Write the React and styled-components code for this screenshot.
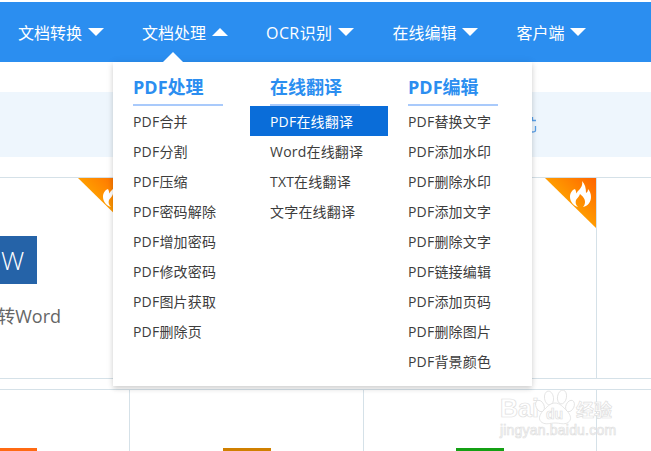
import React from "react";
import styled, { createGlobalStyle } from "styled-components";

const Global = createGlobalStyle`
  html, body { margin: 0; padding: 0; background: #fff; overflow: hidden; }
  * { box-sizing: border-box; }
  body { font-family: "Open Sans", "Noto Sans CJK SC", sans-serif; }
`;

const Page = styled.div`
  position: relative;
  width: 651px;
  height: 451px;
  padding-top: 2px;
  overflow: hidden;
  background: #fff;
`;

const Nav = styled.nav`
  display: flex;
  align-items: center;
  gap: 38px;
  height: 60px;
  padding-left: 18px;
  background: #2b8ef0;
`;

const NavItem = styled.div`
  display: flex;
  align-items: center;
  gap: 6px;
  color: #fff;
  font-size: 16px;
  letter-spacing: ${(p) => (p.$latin ? "0.4px" : "0")};
  white-space: nowrap;
`;

const Arrow = styled.span`
  width: 0;
  height: 0;
  border-left: 8px solid transparent;
  border-right: 8px solid transparent;
  border-top: ${(p) => (p.$up ? "0" : "8px solid #fff")};
  border-bottom: ${(p) => (p.$up ? "8px solid #fff" : "0")};
`;

const Band = styled.div`
  display: flex;
  align-items: center;
  height: 65px;
  margin-top: 30px;
  padding-left: 531px;
  background: #eef6fd;
`;

const Rows = styled.div`
  margin: 20px 0 0 -104px;
`;

const Row = styled.div`
  display: grid;
  grid-template-columns: 234px 234px 233px 234px;
  width: 935px;
  height: ${(p) => (p.$last ? "80px" : "202px")};
  margin-bottom: 10px;
  border-top: 1px solid #d5e1e8;
  border-bottom: ${(p) => (p.$last ? "0" : "1px solid #d5e1e8")};
`;

const Cell = styled.div`
  position: relative;
  display: flex;
  flex-direction: column;
  align-items: center;
  padding-top: 58px;
  border-right: 1px solid #d5e1e8;
`;

const Tile = styled.div`
  display: flex;
  align-items: center;
  justify-content: center;
  width: 48px;
  height: 48px;
  color: #fff;
  font-size: 26px;
  font-weight: 300;
  background: ${(p) => p.$color};
`;

const CellTitle = styled.div`
  margin-top: 20px;
  color: #666;
  font-size: 18px;
  line-height: 24px;
  white-space: nowrap;
`;

const Hot = styled.div`
  position: absolute;
  top: 0;
  right: 0;
  width: 51px;
  height: 50px;
  background: linear-gradient(225deg, #ff6400 0%, #ffa800 62%);
  clip-path: polygon(0 0, 100% 0, 100% 100%);
  svg {
    position: absolute;
    top: 3px;
    right: 3px;
  }
`;

const Menu = styled.div`
  position: absolute;
  top: 62px;
  left: 113px;
  display: grid;
  grid-template-columns: 137px 138px 1fr;
  align-items: start;
  width: 419px;
  height: 324px;
  padding-top: 12px;
  background: #fff;
  box-shadow: 0 3px 5px rgba(0, 0, 0, 0.14), 0 0 8px rgba(0, 0, 0, 0.07);
  &::before {
    content: "";
    position: absolute;
    top: -10px;
    left: 50px;
    border-left: 10px solid transparent;
    border-right: 10px solid transparent;
    border-bottom: 10px solid #fff;
  }
`;

const Heading = styled.div`
  width: 90px;
  height: 32px;
  margin-left: 20px;
  color: #2b8ef0;
  font-size: 18px;
  font-weight: 700;
  line-height: 26px;
  border-bottom: 2px solid #a9cafb;
  white-space: nowrap;
`;

const MenuLink = styled.div`
  height: 30px;
  padding-left: 20px;
  color: ${(p) => (p.$active ? "#fff" : "#3d3d3d")};
  font-size: 14px;
  letter-spacing: 0.2px;
  line-height: 31px;
  white-space: nowrap;
  background: ${(p) => (p.$active ? "#0a6dd9" : "transparent")};
`;

const Watermark = styled.svg`
  position: absolute;
  top: 385px;
  left: 495px;
  pointer-events: none;
  text {
    fill: #fff;
    stroke: #e0e0e0;
    stroke-width: 0.7;
    font-family: "Liberation Sans", "Noto Sans CJK SC", sans-serif;
  }
`;

const columns = [
  { title: "PDF处理", items: ["PDF合并", "PDF分割", "PDF压缩", "PDF密码解除", "PDF增加密码", "PDF修改密码", "PDF图片获取", "PDF删除页"] },
  { title: "在线翻译", items: ["PDF在线翻译", "Word在线翻译", "TXT在线翻译", "文字在线翻译"], active: 0 },
  { title: "PDF编辑", items: ["PDF替换文字", "PDF添加水印", "PDF删除水印", "PDF添加文字", "PDF删除文字", "PDF链接编辑", "PDF添加页码", "PDF删除图片", "PDF背景颜色"] },
];

const navItems = ["文档转换", "文档处理", "OCR识别", "在线编辑", "客户端"];

const HotBadge = () => (
  <Hot>
    <svg width="24" height="26" viewBox="0 0 24 26" fill="#fff">
      <path d="M13 0c1 4-1 7-3 9-1 1-2 2-2.500 3.500C7 11 7 9.500 6 8 3 9 1 12 1 16c0 5 4 9 8 10-2-2-3-4-2-7 1-2 3-3 4-6 2 2 5 4 5 8 0 2-1 4-2 5 5-1 8-5 8-10 0-3-1-6-3-8 0 2-.5 3-2 4 0-5-1-9-4-12z" />
    </svg>
  </Hot>
);

export default function App() {
  return (
    <Page>
      <Global />
      <Nav>
        {navItems.map((label, i) => (
          <NavItem key={label} $latin={i === 2}>
            {label}
            <Arrow $up={i === 1} />
          </NavItem>
        ))}
      </Nav>
      <Band>
        <svg width="6" height="18" viewBox="0 0 6 18" fill="none" stroke="#5aa0e8" strokeWidth="1.3">
          <path d="M1.5 1v3.5h3.5" />
          <path d="M4.5 10v4.5q0 1.5-3.5 1.5" />
        </svg>
      </Band>
      <Rows>
        <Row>
          <Cell>
            <HotBadge />
            <Tile $color="#2563a8">W</Tile>
            <CellTitle>PDF转Word</CellTitle>
          </Cell>
          <Cell>
            <HotBadge />
          </Cell>
          <Cell>
            <HotBadge />
          </Cell>
          <Cell />
        </Row>
        <Row $last>
          <Cell>
            <Tile $color="#ff6a13" />
          </Cell>
          <Cell>
            <Tile $color="#d08000" />
          </Cell>
          <Cell>
            <Tile $color="#14a014" />
          </Cell>
          <Cell />
        </Row>
      </Rows>
      <Menu>
        {columns.map((col) => (
          <div key={col.title}>
            <Heading>{col.title}</Heading>
            {col.items.map((item, i) => (
              <MenuLink key={item} $active={col.active === i}>
                {item}
              </MenuLink>
            ))}
          </div>
        ))}
      </Menu>
      <Watermark width="125" height="56" viewBox="0 0 125 56">
        <text x="5" y="32" fontSize="25" fontWeight="700">Bai</text>
        <g fill="#fff" stroke="#e0e0e0" strokeWidth="0.8">
          <ellipse cx="54" cy="13" rx="4.5" ry="7" transform="rotate(-8 54 13)" />
          <ellipse cx="67" cy="12" rx="4.5" ry="7" transform="rotate(10 67 12)" />
          <ellipse cx="45" cy="21" rx="4" ry="6" transform="rotate(-25 45 21)" />
          <ellipse cx="75" cy="21" rx="4" ry="6" transform="rotate(25 75 21)" />
          <path d="M60 18c5 0 8 4 12 8s5 9 1 11.500-8 .5-13 .5-9 2-13-.5-3-7.500 1-11.500 7-8 12-8z" />
        </g>
        <text x="51" y="34" fontSize="14" fontWeight="700">du</text>
        <text x="81" y="32" fontSize="18" fontWeight="700">经验</text>
        <text x="5" y="50" fontSize="14" letterSpacing="0.2">jingyan.baidu.com</text>
      </Watermark>
    </Page>
  );
}
